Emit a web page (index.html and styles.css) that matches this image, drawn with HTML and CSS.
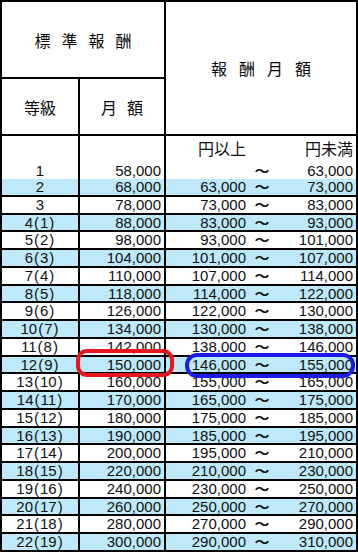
FILE: index.html
```html
<!DOCTYPE html>
<html lang="ja">
<head>
<meta charset="utf-8">
<link rel="stylesheet" href="styles.css">
</head>
<body>
<div class="sheet">
<table class="grades">
<colgroup>
<col class="c-grade"><col class="c-month"><col class="c-from"><col class="c-tilde"><col class="c-to">
</colgroup>
<thead>
<tr class="h1">
<th colspan="2" class="hd"><span class="sp sp11">標準報酬</span></th>
<th colspan="3" rowspan="2" class="hd"><span class="sp sp12">報酬月額</span></th>
</tr>
<tr class="h2">
<th class="hd">等級</th>
<th class="hd"><span class="sp sp10">月額</span></th>
</tr>
</thead>
<tbody>
<tr class="first"><td class="g">1</td><td class="m">58,000</td><td class="f"><div class="lbl solo">円以上</div></td><td class="t"><span class="w">～</span></td><td class="to"><div class="lbl">円未満</div>63,000</td></tr>
<tr class="blue"><td class="g">2</td><td class="m">68,000</td><td class="f">63,000</td><td class="t"><span class="w">～</span></td><td class="to">73,000</td></tr>
<tr><td class="g">3</td><td class="m">78,000</td><td class="f">73,000</td><td class="t"><span class="w">～</span></td><td class="to">83,000</td></tr>
<tr class="blue"><td class="g">4<span class="pa">(</span>1<span class="pa">)</span></td><td class="m">88,000</td><td class="f">83,000</td><td class="t"><span class="w">～</span></td><td class="to">93,000</td></tr>
<tr><td class="g">5<span class="pa">(</span>2<span class="pa">)</span></td><td class="m">98,000</td><td class="f">93,000</td><td class="t"><span class="w">～</span></td><td class="to">101,000</td></tr>
<tr class="blue"><td class="g">6<span class="pa">(</span>3<span class="pa">)</span></td><td class="m">104,000</td><td class="f">101,000</td><td class="t"><span class="w">～</span></td><td class="to">107,000</td></tr>
<tr><td class="g">7<span class="pa">(</span>4<span class="pa">)</span></td><td class="m">110,000</td><td class="f">107,000</td><td class="t"><span class="w">～</span></td><td class="to">114,000</td></tr>
<tr class="blue"><td class="g">8<span class="pa">(</span>5<span class="pa">)</span></td><td class="m">118,000</td><td class="f">114,000</td><td class="t"><span class="w">～</span></td><td class="to">122,000</td></tr>
<tr><td class="g">9<span class="pa">(</span>6<span class="pa">)</span></td><td class="m">126,000</td><td class="f">122,000</td><td class="t"><span class="w">～</span></td><td class="to">130,000</td></tr>
<tr class="blue"><td class="g">10<span class="pa">(</span>7<span class="pa">)</span></td><td class="m">134,000</td><td class="f">130,000</td><td class="t"><span class="w">～</span></td><td class="to">138,000</td></tr>
<tr><td class="g">11<span class="pa">(</span>8<span class="pa">)</span></td><td class="m">142,000</td><td class="f">138,000</td><td class="t"><span class="w">～</span></td><td class="to">146,000</td></tr>
<tr class="blue"><td class="g">12<span class="pa">(</span>9<span class="pa">)</span></td><td class="m">150,000</td><td class="f">146,000</td><td class="t"><span class="w">～</span></td><td class="to">155,000</td></tr>
<tr><td class="g">13<span class="pa">(</span>10<span class="pa">)</span></td><td class="m">160,000</td><td class="f">155,000</td><td class="t"><span class="w">～</span></td><td class="to">165,000</td></tr>
<tr class="blue"><td class="g">14<span class="pa">(</span>11<span class="pa">)</span></td><td class="m">170,000</td><td class="f">165,000</td><td class="t"><span class="w">～</span></td><td class="to">175,000</td></tr>
<tr><td class="g">15<span class="pa">(</span>12<span class="pa">)</span></td><td class="m">180,000</td><td class="f">175,000</td><td class="t"><span class="w">～</span></td><td class="to">185,000</td></tr>
<tr class="blue"><td class="g">16<span class="pa">(</span>13<span class="pa">)</span></td><td class="m">190,000</td><td class="f">185,000</td><td class="t"><span class="w">～</span></td><td class="to">195,000</td></tr>
<tr><td class="g">17<span class="pa">(</span>14<span class="pa">)</span></td><td class="m">200,000</td><td class="f">195,000</td><td class="t"><span class="w">～</span></td><td class="to">210,000</td></tr>
<tr class="blue"><td class="g">18<span class="pa">(</span>15<span class="pa">)</span></td><td class="m">220,000</td><td class="f">210,000</td><td class="t"><span class="w">～</span></td><td class="to">230,000</td></tr>
<tr><td class="g">19<span class="pa">(</span>16<span class="pa">)</span></td><td class="m">240,000</td><td class="f">230,000</td><td class="t"><span class="w">～</span></td><td class="to">250,000</td></tr>
<tr class="blue"><td class="g">20<span class="pa">(</span>17<span class="pa">)</span></td><td class="m">260,000</td><td class="f">250,000</td><td class="t"><span class="w">～</span></td><td class="to">270,000</td></tr>
<tr><td class="g">21<span class="pa">(</span>18<span class="pa">)</span></td><td class="m">280,000</td><td class="f">270,000</td><td class="t"><span class="w">～</span></td><td class="to">290,000</td></tr>
<tr class="blue"><td class="g">22<span class="pa">(</span>19<span class="pa">)</span></td><td class="m">300,000</td><td class="f">290,000</td><td class="t"><span class="w">～</span></td><td class="to">310,000</td></tr>
</tbody>
</table>
<div class="mark mark-red"></div>
<div class="mark mark-blue"></div>
</div>
</body>
</html>
```
FILE: styles.css
```css
html, body {
  margin: 0;
  padding: 0;
  background: #fff;
}
.sheet {
  position: relative;
  width: 358px;
  height: 553px;
}
.grades {
  width: 358px;
  table-layout: fixed;
  border-collapse: separate;
  border-spacing: 0;
  border-top: 2px solid #000;
  border-left: 2px solid #000;
  font-family: "Liberation Sans", "Noto Sans CJK JP", sans-serif;
  font-size: 15px;
  color: #111;
}
.grades col, .grades th, .grades td {
  box-sizing: border-box;
}
.c-grade { width: 78px; }
.c-month { width: 86px; }
.c-from { width: 84px; }
.c-tilde { width: 24px; }
.c-to { width: 84px; }

.hd {
  font-family: "Noto Sans CJK JP", sans-serif;
  font-weight: normal;
  font-size: 16px;
  text-align: center;
  vertical-align: middle;
  padding: 0;
  border-right: 2px solid #000;
  border-bottom: 2px solid #000;
  line-height: 20px;
  color: #0a0a0a;
}
.sp { display: inline-block; }
.sp10 { letter-spacing: 10px; margin-right: -10px; }
.sp11 { letter-spacing: 11px; margin-right: -11px; }
.sp12 { letter-spacing: 12px; margin-right: -12px; }

.h1 { height: 77px; }
.h2 { height: 57px; }

tbody tr { height: 17.75px; }
tbody td {
  padding: 0;
  line-height: 15.75px;
  vertical-align: bottom;
  border-bottom: 2px solid #000;
  white-space: nowrap;
}
tbody tr.first { height: 43px; }
tbody tr.first td {
  border-bottom: none;
  line-height: 16px;
}
tr.blue td { background: #bde9fa; }

.g {
  text-align: center;
  border-right: 2px solid #000;
}
.pa { margin: 0 1px; }
.m {
  text-align: right;
  padding-right: 3px !important;
  border-right: 2px solid #000;
}
.f {
  text-align: right;
  padding-right: 4px !important;
}
.t {
  text-align: center;
}
.w {
  display: inline-block;
  vertical-align: top;
  line-height: 15px;
  font-family: "Noto Sans CJK JP", sans-serif;
  font-size: 12px;
  font-weight: bold;
  transform: scaleX(1.25);
}
.to {
  text-align: right;
  padding-right: 3px !important;
  border-right: 2px solid #000;
}
.lbl {
  font-family: "Noto Sans CJK JP", sans-serif;
  font-size: 16px;
  line-height: 16px;
  margin-bottom: 7px;
}
.lbl.solo { margin-bottom: 23px; }

.mark {
  position: absolute;
  box-sizing: border-box;
  border-width: 4px;
  border-style: solid;
}
.mark-red {
  left: 76px;
  top: 349px;
  width: 98px;
  height: 28px;
  border-color: #e8141e;
  border-radius: 11px;
}
.mark-blue {
  left: 185px;
  top: 353px;
  width: 170px;
  height: 25px;
  border-color: #1c1ce6;
  border-radius: 12px;
}
```
